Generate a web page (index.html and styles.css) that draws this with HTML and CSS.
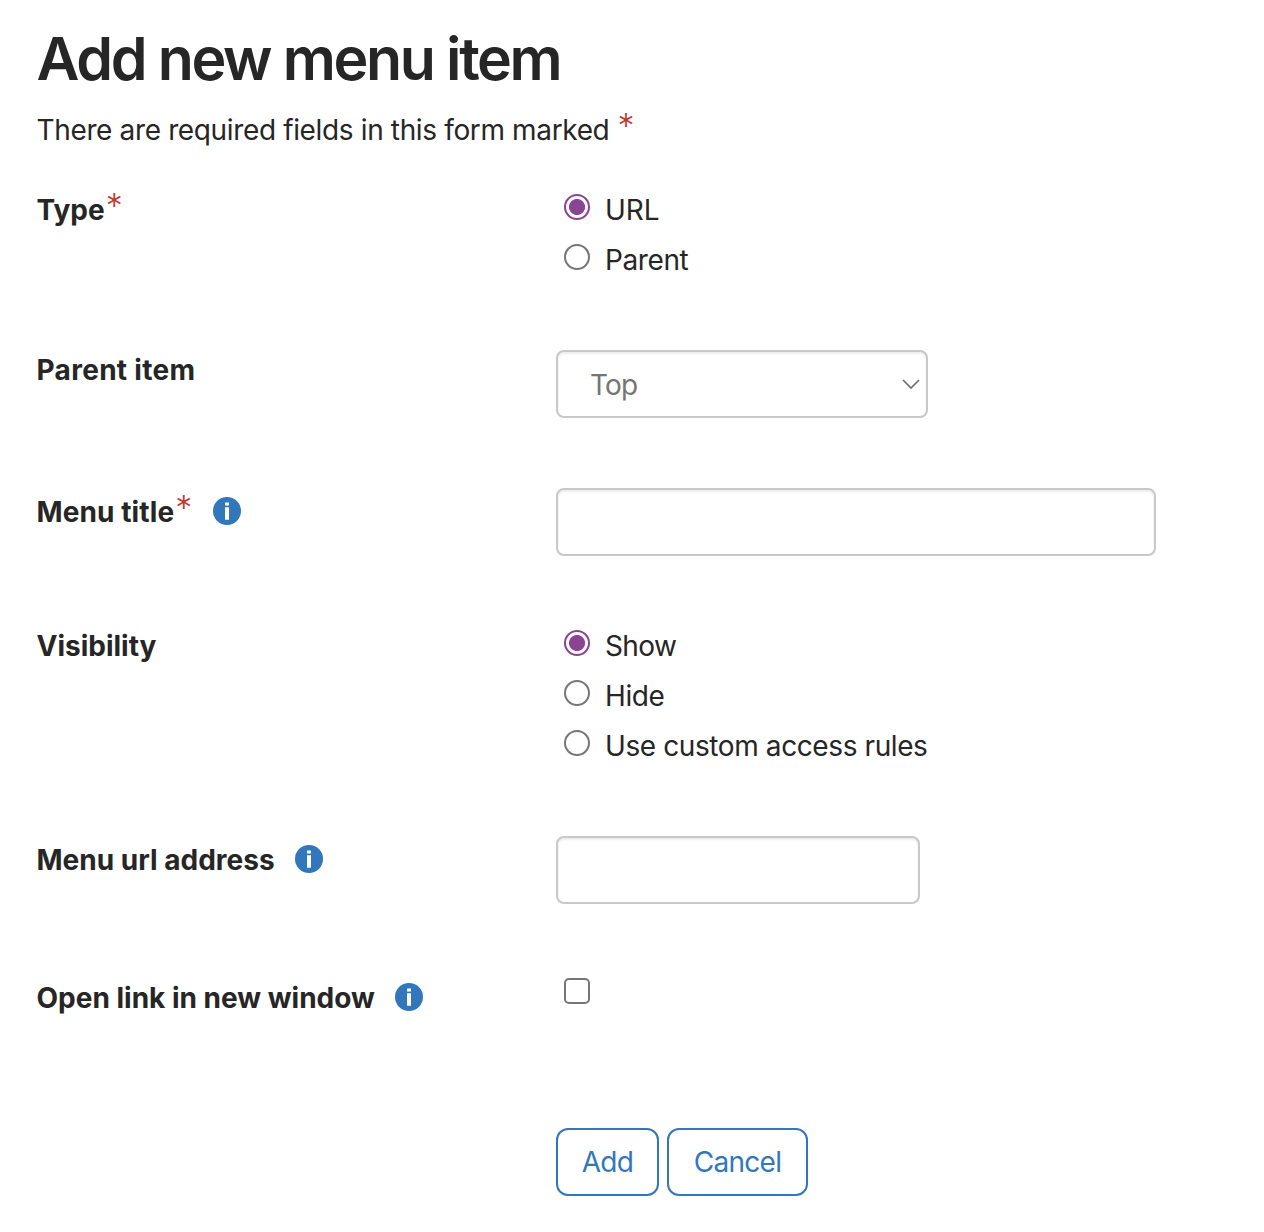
FILE: index.html
```html
<!DOCTYPE html>
<html lang="en">
<head>
    <meta charset="UTF-8">
    <meta name="viewport" content="width=device-width, initial-scale=1.0">
    <title>Add new menu item</title>
    <link rel="stylesheet" href="styles.css">
</head>
<body>
    <div class="container">
        <h1>Add new menu item</h1>
        <p class="required-note"><span>There are required fields in this form marked</span> <span class="star">*</span></p>
        <form>
            <div class="form-row row-type">
                <div class="form-label"><span>Type</span><span class="star">*</span></div>
                <div class="options">
                    <label class="option"><input type="radio" name="type" checked><span class="text-url">URL</span></label>
                    <label class="option"><input type="radio" name="type"><span>Parent</span></label>
                </div>
            </div>
            <div class="form-row">
                <label class="form-label label-parent" for="parent">Parent item</label>
                <div class="select-wrapper">
                    <select id="parent">
                        <option>Top</option>
                    </select>
                    <svg class="chevron" width="18" height="10" viewBox="0 0 18 10"><path d="M1 1l8 8 8-8" fill="none" stroke="#6e6e6e" stroke-width="1.7"/></svg>
                </div>
            </div>
            <div class="form-row row-offset">
                <label class="form-label label-title" for="title"><span>Menu title</span><span class="star">*</span><svg class="info" width="28" height="28" viewBox="0 0 28 28"><circle cx="14" cy="14" r="14" fill="#3277bc"/><path d="M12 5.5h4v3h-4zM12 10.2h4v12.6h-4z" fill="#fff"/></svg></label>
                <input type="text" id="title" class="input-wide">
            </div>
            <div class="form-row row-visibility">
                <div class="form-label">Visibility</div>
                <div class="options">
                    <label class="option"><input type="radio" name="visibility" checked><span class="text-show">Show</span></label>
                    <label class="option"><input type="radio" name="visibility"><span>Hide</span></label>
                    <label class="option"><input type="radio" name="visibility"><span>Use custom access rules</span></label>
                </div>
            </div>
            <div class="form-row row-offset">
                <label class="form-label" for="url"><span>Menu url address</span><svg class="info" width="28" height="28" viewBox="0 0 28 28"><circle cx="14" cy="14" r="14" fill="#3277bc"/><path d="M12 5.5h4v3h-4zM12 10.2h4v12.6h-4z" fill="#fff"/></svg></label>
                <input type="text" id="url" class="input-short">
            </div>
            <div class="form-row row-offset row-window">
                <label class="form-label" for="window"><span>Open link in new window</span><svg class="info" width="28" height="28" viewBox="0 0 28 28"><circle cx="14" cy="14" r="14" fill="#3277bc"/><path d="M12 5.5h4v3h-4zM12 10.2h4v12.6h-4z" fill="#fff"/></svg></label>
                <input type="checkbox" id="window">
            </div>
            <div class="buttons">
                <button type="button" class="btn-add">Add</button>
                <button type="button" class="btn-cancel">Cancel</button>
            </div>
        </form>
    </div>
</body>
</html>
```
FILE: styles.css
```css
* {
    box-sizing: border-box;
}
body {
    margin: 0;
    background: #fff;
    color: #262626;
    font-family: Inter, "Liberation Sans", sans-serif;
    font-size: 28px;
    line-height: 40px;
}
.container {
    padding: 22px 36.5px 0;
}
h1 {
    margin: 0;
    font-size: 59px;
    font-weight: 600;
    line-height: 73px;
    letter-spacing: -2.35px;
}
.required-note {
    display: flex;
    align-items: center;
    gap: 7px;
    height: 40px;
    margin: 15px 0 40px;
    letter-spacing: -0.36px;
}
.star {
    margin: 0 1px 8px;
    color: #c0392f;
    font-size: 34px;
    font-weight: 300;
    letter-spacing: 0;
}
.form-row {
    display: grid;
    grid-template-columns: 519.5px 1fr;
    align-items: start;
    height: 138px;
}
.row-type {
    height: 160px;
}
.row-visibility {
    height: 210px;
}
.row-window {
    height: 154px;
}
.form-label {
    display: flex;
    align-items: center;
    height: 40px;
    font-weight: 700;
}
.label-parent {
    letter-spacing: 0.3px;
}
.label-title {
    letter-spacing: 0.1px;
}
.row-offset .form-label {
    margin-top: 4px;
}
.info {
    margin: 0 0 2px 20px;
}
.options {
    display: flex;
    flex-direction: column;
    gap: 10px;
}
.option {
    display: flex;
    height: 40px;
    letter-spacing: -0.4px;
}
.text-url {
    letter-spacing: 0;
}
.text-show {
    letter-spacing: -0.6px;
}
input, select, button {
    margin: 0;
    font: inherit;
    appearance: none;
}
input[type="radio"] {
    width: 26px;
    height: 26px;
    margin: 4px 15px 0 8px;
    border: 2px solid #767676;
    border-radius: 50%;
    background: #fff;
}
input[type="radio"]:checked {
    border-color: #8b4494;
    background: radial-gradient(circle, #8b4494 7.6px, #fff 8.4px);
}
input[type="checkbox"] {
    width: 26px;
    height: 26px;
    margin: 4px 0 0 8px;
    border: 2px solid #767676;
    border-radius: 5px;
}
input[type="text"], select {
    height: 68px;
    border: 2px solid #c8c8c8;
    border-radius: 8px;
    background: #fff;
    box-shadow: inset 0 2px 2px rgba(0, 0, 0, 0.075);
}
.input-wide {
    width: 600px;
}
.input-short {
    width: 364px;
}
.select-wrapper {
    display: grid;
    align-items: center;
    width: 372px;
}
.select-wrapper > * {
    grid-area: 1 / 1;
}
select {
    width: 372px;
    padding: 2px 32px 0;
    color: #757575;
    letter-spacing: -0.8px;
}
.chevron {
    justify-self: end;
    margin-right: 8px;
    pointer-events: none;
}
.buttons {
    display: flex;
    gap: 8px;
    margin-left: 519.5px;
}
button {
    height: 68px;
    padding: 0;
    border: 2px solid #3277bc;
    border-radius: 12px;
    background: #fff;
    color: #3277bc;
    letter-spacing: -0.7px;
}
.btn-add {
    width: 103px;
}
.btn-cancel {
    width: 141px;
}
```
